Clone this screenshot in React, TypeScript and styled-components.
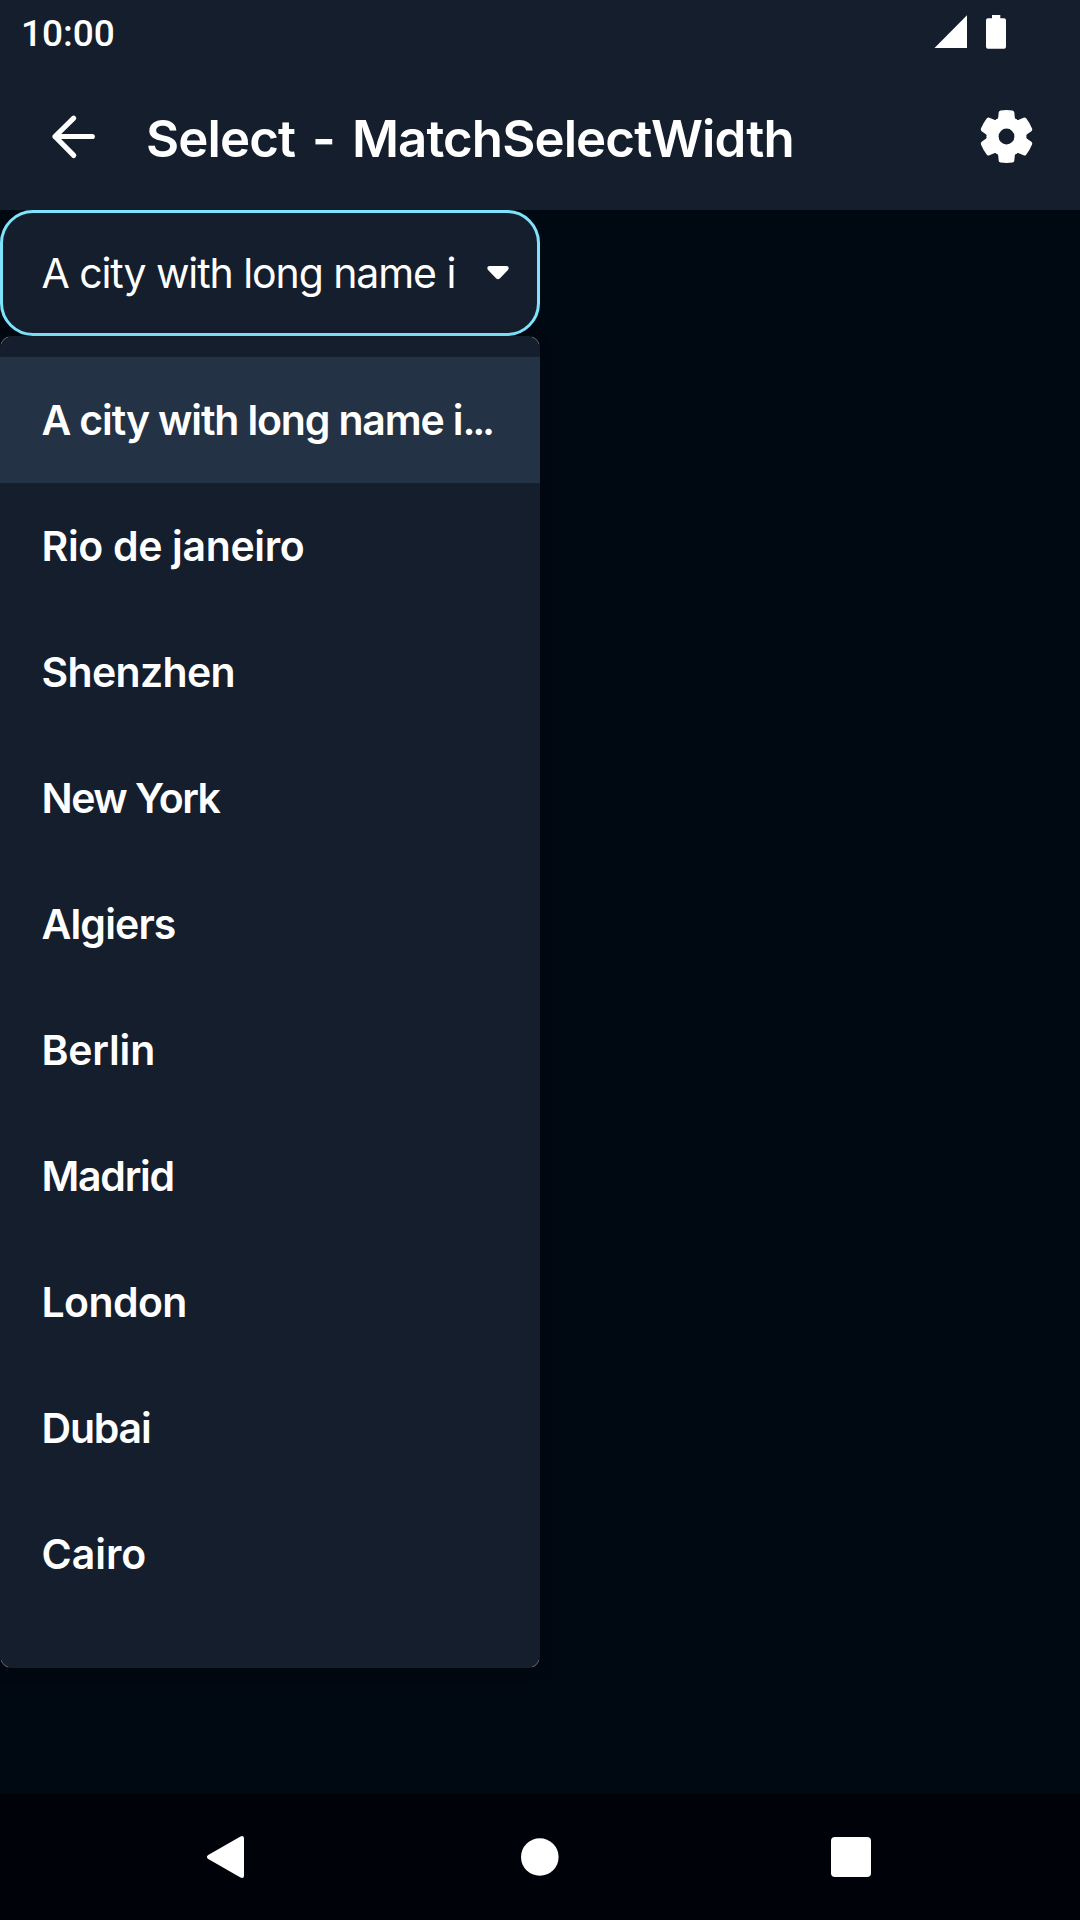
import React from "react";
import styled, { createGlobalStyle } from "styled-components";

const colors = {
  surface: "#141e2c",
  background: "#000811",
  selected: "#243245",
  accent: "#7ee4fb",
  navigation: "#000209",
  content: "#ffffff",
};

const GlobalStyle = createGlobalStyle`
  * { box-sizing: border-box; }
  body { margin: 0; background: ${colors.background}; }
`;

const Screen = styled.div`
  width: 1080px;
  height: 1920px;
  display: flex;
  flex-direction: column;
  overflow: hidden;
  background: ${colors.background};
  color: ${colors.content};
  font-family: Inter, "Liberation Sans", sans-serif;
  white-space: nowrap;
`;

const StatusBar = styled.div`
  height: 63px;
  flex: none;
  display: flex;
  align-items: center;
  justify-content: space-between;
  padding: 3px 73px 0 21px;
  background: ${colors.surface};
`;

const Clock = styled.span`
  padding-top: 1px;
  font: 500 37px/44px Roboto, sans-serif;
`;

const StatusIcons = styled.div`
  display: flex;
  align-items: center;
  padding-bottom: 2px;
`;

const AppBar = styled.header`
  height: 147px;
  flex: none;
  display: flex;
  align-items: center;
  padding: 0 42px;
  background: ${colors.surface};
`;

const IconButton = styled.button`
  width: 63px;
  height: 63px;
  padding: 0;
  border: 0;
  display: flex;
  align-items: center;
  justify-content: center;
  background: none;
  color: inherit;
`;

const Title = styled.h1`
  flex: 1;
  margin: 0;
  padding: 5px 0 0 41px;
  font-size: 51px;
  line-height: 60px;
  font-weight: 600;
  letter-spacing: -0.9px;
  word-spacing: 5px;
`;

const Content = styled.main`
  flex: 1;
  min-height: 0;
  width: 540px;
`;

const SelectField = styled.div`
  height: 126px;
  display: flex;
  align-items: center;
  justify-content: space-between;
  padding: 0 27px 0 38.5px;
  border: 3px solid ${colors.accent};
  border-radius: 33px;
  background: ${colors.surface};
`;

const SelectValue = styled.span`
  width: 414.5px;
  overflow: hidden;
  font-size: 41px;
  line-height: 56px;
  letter-spacing: -1.08px;
`;

const Menu = styled.ul`
  position: relative;
  height: 1332px;
  margin: 0;
  padding: 21px 0 0;
  list-style: none;
  overflow: hidden;
  border-radius: 11px;
  background: ${colors.surface};
  box-shadow: 0 4px 14px rgba(0, 0, 0, 0.15);

  /* Hairline highlight on the rounded corners only */
  &::after {
    content: "";
    position: absolute;
    inset: 0;
    border: 1px solid rgba(255, 255, 255, 0.35);
    border-radius: 11px;
    pointer-events: none;
    --tile: linear-gradient(#000, #000);
    mask: var(--tile) 0 0 / 8px 8px, var(--tile) 100% 0 / 8px 8px,
      var(--tile) 0 100% / 8px 8px, var(--tile) 100% 100% / 8px 8px;
    mask-repeat: no-repeat;
  }
`;

const MenuItem = styled.li<{ $selected?: boolean; $tracking: number }>`
  height: 126px;
  display: flex;
  align-items: center;
  padding: 0 42px 1px 41.5px;
  background: ${(p) => (p.$selected ? colors.selected : "transparent")};
  font-size: 41px;
  line-height: 56px;
  font-weight: 600;
  letter-spacing: ${(p) => p.$tracking}px;
`;

const Ellipsis = styled.span`
  letter-spacing: -3.2px;
`;

const NavigationBar = styled.nav`
  height: 126px;
  flex: none;
  display: flex;
  align-items: center;
  justify-content: space-between;
  padding: 0 197px;
  background: ${colors.navigation};
`;

const cities = [
  { name: "A city with long name i", tracking: -1.15, truncated: true },
  { name: "Rio de janeiro", tracking: -0.34 },
  { name: "Shenzhen", tracking: -0.65 },
  { name: "New York", tracking: -1.5 },
  { name: "Algiers", tracking: -0.85 },
  { name: "Berlin", tracking: -0.2 },
  { name: "Madrid", tracking: -1.25 },
  { name: "London", tracking: -0.6 },
  { name: "Dubai", tracking: -1.2 },
  { name: "Cairo", tracking: 0 },
];

const BackIcon = () => (
  <svg width="63" height="63" viewBox="0 0 63 63" fill="none" stroke="currentColor" strokeWidth="5.2" strokeLinecap="round" strokeLinejoin="round">
    <path d="M50.3 31.5H13M31.7 13.2L13 31.5L31.7 50.4" />
  </svg>
);

const GearIcon = () => (
  <svg width="63" height="63" viewBox="-31.5 -31.5 63 63" fill="currentColor">
    <circle r="19.8" />
    {[0, 60, 120, 180, 240, 300].map((angle) => (
      <path
        key={angle}
        transform={`rotate(${angle})`}
        d="M-10.6-16.8Q-8.5-17-8.3-19L-7.8-24.2Q-7.6-25.8-5.9-26.1Q0-26.9 5.9-26.1Q7.6-25.8 7.8-24.2L8.3-19Q8.5-17 10.6-16.8L0 0Z"
      />
    ))}
    <circle r="7.9" fill={colors.surface} />
  </svg>
);

const CaretIcon = () => (
  <svg width="24" height="16" viewBox="0 0 24 16" fill="currentColor">
    <path d="M3.5 1H20.5Q22.7 1 22.7 3Q22.7 4.2 21.7 5.2L14 13.3Q12 15.4 10 13.3L2.3 5.2Q1.3 4.2 1.3 3Q1.3 1 3.5 1Z" />
  </svg>
);

export default function App() {
  return (
    <Screen>
      <GlobalStyle />
      <StatusBar>
        <Clock>10:00</Clock>
        <StatusIcons>
          <svg width="73" height="36" viewBox="0 0 73 36" fill="currentColor">
            <path d="M0.5 34H33V1.2Z" />
            <path d="M58 1h8.3v3.3H70q2 0 2 2V32.7q0 2-2 2H54q-2 0-2-2V6.3q0-2 2-2h4Z" />
          </svg>
        </StatusIcons>
      </StatusBar>
      <AppBar>
        <IconButton aria-label="Back"><BackIcon /></IconButton>
        <Title>Select - MatchSelectWidth</Title>
        <IconButton aria-label="Settings"><GearIcon /></IconButton>
      </AppBar>
      <Content>
        <SelectField>
          <SelectValue>A city with long name in</SelectValue>
          <CaretIcon />
        </SelectField>
        <Menu>
          {cities.map((city, index) => (
            <MenuItem key={city.name} $selected={index === 0} $tracking={city.tracking}>
              {city.name}
              {city.truncated && <Ellipsis>...</Ellipsis>}
            </MenuItem>
          ))}
        </Menu>
      </Content>
      <NavigationBar>
        <svg width="64" height="64" viewBox="0 0 64 64" fill={colors.content}>
          <path d="M43.5 11.4Q47 9.8 47 13.5V50.5Q47 54.2 43.5 52.6L11.2 34Q8.5 32 11.2 30Z" />
        </svg>
        <svg width="64" height="64" viewBox="0 0 64 64" fill={colors.content}>
          <circle cx="31.8" cy="32" r="18.8" />
        </svg>
        <svg width="64" height="64" viewBox="0 0 64 64" fill={colors.content}>
          <rect x="12" y="12" width="40" height="40" rx="4" />
        </svg>
      </NavigationBar>
    </Screen>
  );
}
